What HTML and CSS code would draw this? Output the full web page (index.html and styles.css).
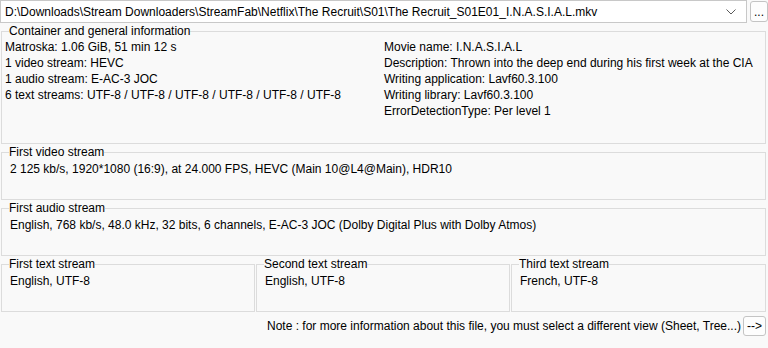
FILE: index.html
```html
<!DOCTYPE html>
<html>
<head>
  <meta charset="UTF-8">
  <title>MediaInfo</title>
  <link rel="stylesheet" href="styles.css">
</head>
<body>
  <div class="window">
    <div class="file-row">
      <div class="combo">
        <span class="combo-text">D:\Downloads\Stream Downloaders\StreamFab\Netflix\The Recruit\S01\The Recruit_S01E01_I.N.A.S.I.A.L.mkv</span>
        <svg class="combo-arrow" width="10" height="6" viewBox="0 0 10 6">
          <path d="M0.5 0.5 L5 5 L9.5 0.5" fill="none" stroke="#5a5a5a" stroke-width="1"/>
        </svg>
      </div>
      <button class="small-btn browse-btn">...</button>
    </div>

    <fieldset class="group group-general">
      <legend>Container and general information</legend>
      <div class="general-cols">
        <div class="col">
          <div>Matroska: 1.06 GiB, 51 min 12 s</div>
          <div>1 video stream: HEVC</div>
          <div>1 audio stream: E-AC-3 JOC</div>
          <div>6 text streams: UTF-8 / UTF-8 / UTF-8 / UTF-8 / UTF-8 / UTF-8</div>
        </div>
        <div class="col">
          <div>Movie name: I.N.A.S.I.A.L</div>
          <div>Description: Thrown into the deep end during his first week at the CIA</div>
          <div>Writing application: Lavf60.3.100</div>
          <div>Writing library: Lavf60.3.100</div>
          <div>ErrorDetectionType: Per level 1</div>
        </div>
      </div>
    </fieldset>

    <fieldset class="group">
      <legend>First video stream</legend>
      <div class="group-body">2 125 kb/s, 1920*1080 (16:9), at 24.000 FPS, HEVC (Main 10@L4@Main), HDR10</div>
    </fieldset>

    <fieldset class="group">
      <legend>First audio stream</legend>
      <div class="group-body">English, 768 kb/s, 48.0 kHz, 32 bits, 6 channels, E-AC-3 JOC (Dolby Digital Plus with Dolby Atmos)</div>
    </fieldset>

    <div class="text-streams">
      <fieldset class="group">
        <legend>First text stream</legend>
        <div class="group-body">English, UTF-8</div>
      </fieldset>
      <fieldset class="group">
        <legend>Second text stream</legend>
        <div class="group-body">English, UTF-8</div>
      </fieldset>
      <fieldset class="group">
        <legend>Third text stream</legend>
        <div class="group-body">French, UTF-8</div>
      </fieldset>
    </div>

    <div class="note-row">
      <span class="note">Note : for more information about this file, you must select a different view (Sheet, Tree...)</span>
      <button class="small-btn next-btn">--&gt;</button>
    </div>
  </div>
</body>
</html>
```

FILE: styles.css
```css
* {
  box-sizing: border-box;
  margin: 0;
  padding: 0;
}

body {
  font-family: 'Liberation Sans', Arial, sans-serif;
  font-size: 12px;
  line-height: 16px;
  color: #000000;
  background: #f9f9f9;
  width: 768px;
  height: 348px;
  overflow: hidden;
}

.window {
  display: flex;
  flex-direction: column;
}

/* File selector */
.file-row {
  display: flex;
  align-items: flex-start;
  gap: 3px;
  height: 24px;
}

.combo {
  width: 747px;
  height: 23px;
  background: #ffffff;
  border: 1px solid #c8c8c8;
  display: flex;
  align-items: center;
  justify-content: space-between;
  padding: 0 10px 0 4px;
}

.combo-text {
  white-space: nowrap;
}

.small-btn {
  font-family: 'Liberation Sans', Arial, sans-serif;
  font-size: 12px;
  background: #fdfdfd;
  border: 1px solid #c4c4c4;
  border-radius: 3px;
  color: #000000;
}

.browse-btn {
  width: 18px;
  height: 21px;
  margin-top: 1px;
  line-height: 18px;
  padding: 0;
}

/* Group boxes */
.group {
  border: 1px solid #dcdcdc;
  margin: 0 2px 0 1px;
  padding: 0 4px 22px 7px;
  min-width: 0;
}

.group legend {
  line-height: 14px;
  padding: 0;
  margin-left: 0;
}

.group + .group,
.group + .text-streams {
  margin-top: 1px;
}

.group-general {
  margin-top: 0;
  padding: 1px 4px 24px 3px;
}

.group-general legend {
  margin-left: 4px;
}

.general-cols {
  display: grid;
  grid-template-columns: 379px 1fr;
}

.group-body {
  padding: 2px 0 0 1px;
  white-space: nowrap;
}

/* Text streams */
.text-streams {
  display: grid;
  grid-template-columns: 254px 254px 1fr;
  gap: 1px;
  margin: 1px 2px 0 1px;
}

.text-streams .group {
  margin: 0;
}

/* Note */
.note-row {
  display: flex;
  justify-content: flex-end;
  align-items: center;
  gap: 2px;
  margin-top: 4px;
  padding-right: 2px;
}

.next-btn {
  width: 23px;
  height: 20px;
  padding: 0;
  line-height: 16px;
}
```
